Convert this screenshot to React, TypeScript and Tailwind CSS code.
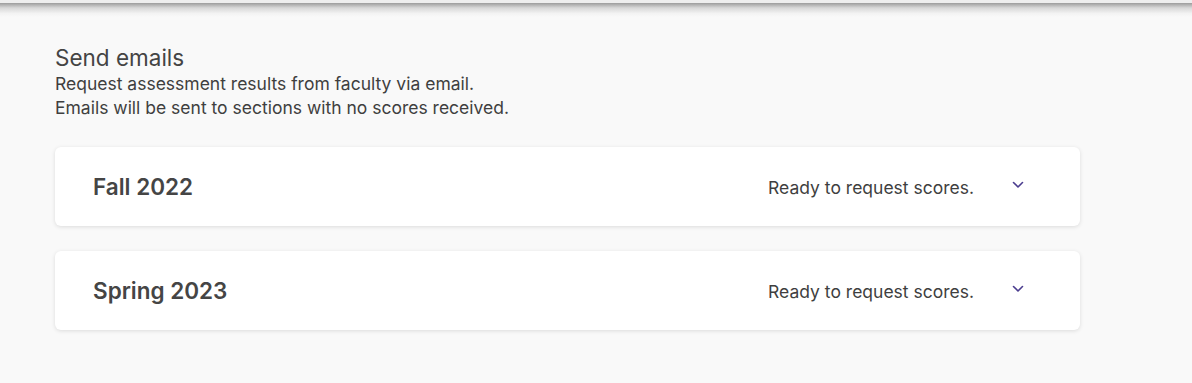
import React from "react";

function Chevron() {
  return (
    <svg width="12" height="8" viewBox="0 0 12 8" fill="none" className="text-[#4b3d8f]">
      <path d="M1.5 1.5 L6 6 L10.5 1.5" stroke="currentColor" strokeWidth="1.6" strokeLinecap="round" strokeLinejoin="round" />
    </svg>
  );
}

function TermCard({ term }: { term: string }) {
  return (
    <div className="flex h-[79px] w-[1025px] items-center justify-between rounded-md bg-white pl-[38px] pr-[56px] shadow-[0_1px_4px_rgba(0,0,0,0.12)]">
      <div className="text-[22.5px] font-semibold text-[#454545]">{term}</div>
      <div className="flex items-center pt-[3px]">
        <span className="text-[17.5px] text-[#3f3f3f]">Ready to request scores.</span>
        <span className="ml-[38px] flex items-center pb-[6px]">
          <Chevron />
        </span>
      </div>
    </div>
  );
}

export default function App() {
  return (
    <div className="min-h-[383px] w-[1192px] bg-[#f9f9f9] font-['Inter','Liberation_Sans',sans-serif]">
      <div className="h-[3px] bg-[#eeeeee]" />
      <div className="h-[14px] bg-[linear-gradient(to_bottom,#9c9c9c,#d8d8d8_35%,#f3f3f3_75%,#f9f9f9)]" />
      <div className="pl-[55px] pt-[27px]">
        <h1 className="text-[22.5px] leading-[28px] text-[#444]">Send emails</h1>
        <p className="text-[17.5px] leading-[24px] text-[#3f3f3f]">
          Request assessment results from faculty via email.
          <br />
          Emails will be sent to sections with no scores received.
        </p>
        <div className="mt-[27px] flex flex-col gap-[25px]">
          <TermCard term="Fall 2022" />
          <TermCard term="Spring 2023" />
        </div>
      </div>
    </div>
  );
}
